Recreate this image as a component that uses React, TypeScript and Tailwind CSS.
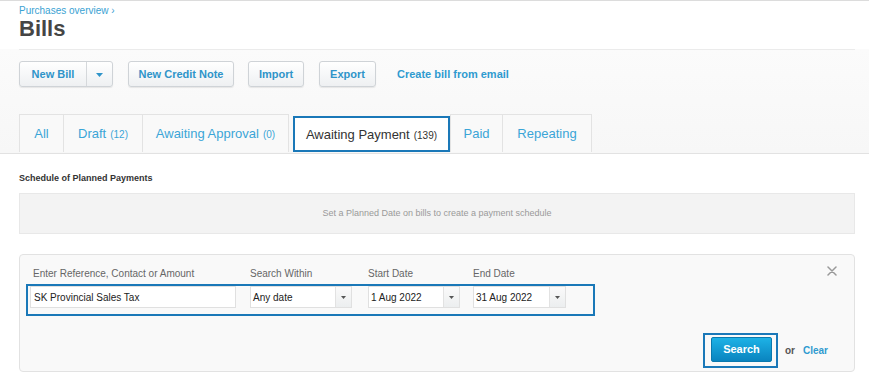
const font = { fontFamily: '"Liberation Sans", Arial, Helvetica, sans-serif' };

interface TabItem {
  label: string;
  count?: number;
  width: number;
  active?: boolean;
}

const tabs: TabItem[] = [
  { label: 'All', width: 45 },
  { label: 'Draft', count: 12, width: 79 },
  { label: 'Awaiting Approval', count: 0, width: 146 },
  { label: 'Awaiting Payment', count: 139, width: 157, active: true },
  { label: 'Paid', width: 53 },
  { label: 'Repeating', width: 89 },
];

function Caret() {
  return (
    <svg width="7" height="4" viewBox="0 0 7 4">
      <path d="M0 0 L7 0 L3.5 4 Z" fill="currentColor" />
    </svg>
  );
}

function ToolButton({ label, width }: { label: string; width: number }) {
  return (
    <button
      className="h-[26px] rounded-[3px] border border-[#cfd3d7] bg-gradient-to-b from-white to-[#eef0f2] text-[11px] font-bold text-[#2f94c9] shadow-[0_1px_1px_rgba(0,0,0,0.08)]"
      style={{ width }}
    >
      {label}
    </button>
  );
}

function SelectBox({ value, width }: { value: string; width: number }) {
  return (
    <div
      className="flex h-[22px] border border-[#e0e0e0] bg-white"
      style={{ width }}
    >
      <div className="flex flex-1 items-center pl-[2px] text-[10px] text-[#222]">{value}</div>
      <div className="flex w-[16px] items-center justify-center border-l border-[#e2e2e2] bg-gradient-to-b from-[#fafafa] to-[#eceeef] text-[#555]">
        <svg width="5" height="3" viewBox="0 0 5 3">
          <path d="M0 0 L5 0 L2.5 3 Z" fill="currentColor" />
        </svg>
      </div>
    </div>
  );
}

export default function App() {
  return (
    <div className="h-[382px] w-[869px] overflow-hidden border-t border-[#dcdcdc] bg-white" style={font}>
      {/* header */}
      <div className="h-[48px] pl-[19px] pr-[14px] pt-[5px]">
        <div className="text-[10px] leading-[10px] text-[#3aa2d3]">Purchases overview ›</div>
        <h1 className="text-[22px] font-bold leading-[26px] text-[#454545]">Bills</h1>
      </div>

      {/* action band */}
      <div className="h-[105px] border-b border-[#e2e2e2] bg-gradient-to-b from-[#fbfbfb] to-[#f7f7f7]">
        <div className="ml-[19px] mr-[14px] h-[1px] bg-[#ebebeb]" />
        <div className="mt-[11px] flex items-center px-[19px]">
          <div className="flex h-[26px] w-[94px] rounded-[3px] border border-[#cfd3d7] bg-gradient-to-b from-white to-[#eef0f2] text-[#2f94c9] shadow-[0_1px_1px_rgba(0,0,0,0.08)]">
            <span className="flex w-[66px] items-center justify-center text-[11px] font-bold">New Bill</span>
            <span className="flex flex-1 items-center justify-center border-l border-[#d5d8db] pt-[2px]">
              <Caret />
            </span>
          </div>
          <div className="ml-[15px]">
            <ToolButton label="New Credit Note" width={106} />
          </div>
          <div className="ml-[14px]">
            <ToolButton label="Import" width={56} />
          </div>
          <div className="ml-[15px]">
            <ToolButton label="Export" width={57} />
          </div>
          <a className="ml-[21px] text-[11px] font-bold text-[#2f9bd0]">Create bill from email</a>
        </div>

        <div className="mt-[27px] flex items-end px-[19px]">
          {tabs.map((t) =>
            t.active ? (
              <div
                key={t.label}
                className="ml-[4px] flex h-[36px] items-center justify-center border-2 border-[#1a78b8] bg-white text-[#333]"
                style={{ width: t.width }}
              >
                <span className="text-[13px]">
                  {t.label}
                  <span className="ml-[4px] text-[10px]">({t.count})</span>
                </span>
              </div>
            ) : (
              <div
                key={t.label}
                className="flex h-[38px] items-center justify-center border border-b-0 border-[#e3e3e3] bg-[#f9f9f9] text-[#3ba5d7] [&+&]:border-l-0"
                style={{ width: t.width }}
              >
                <span className="text-[13px]">
                  {t.label}
                  {t.count !== undefined && <span className="ml-[4px] text-[10px]">({t.count})</span>}
                </span>
              </div>
            )
          )}
        </div>
      </div>

      {/* schedule */}
      <div className="pl-[19px] pr-[14px] pt-[19px]">
        <div className="text-[9px] font-bold leading-[11px] text-[#333]">Schedule of Planned Payments</div>
        <div className="mt-[9px] flex h-[41px] items-center justify-center border border-[#e8e8e8] bg-[#f3f3f3] text-[9px] text-[#9a9a9a]">
          Set a Planned Date on bills to create a payment schedule
        </div>

        {/* search panel */}
        <div className="relative mt-[20px] h-[118px] rounded-[4px] border border-[#e2e2e2] bg-[#f9f9f9]">
          <button className="absolute right-[17px] top-[11px] text-[#999]">
            <svg width="10" height="10" viewBox="0 0 10 10">
              <path d="M1 1 L9 9 M9 1 L1 9" stroke="currentColor" strokeWidth="1.5" strokeLinecap="round" />
            </svg>
          </button>

          <div className="flex pt-[13px] text-[10px] leading-[12px] text-[#666]">
            <span className="w-[230px] pl-[13px]">Enter Reference, Contact or Amount</span>
            <span className="w-[118px]">Search Within</span>
            <span className="w-[105px]">Start Date</span>
            <span>End Date</span>
          </div>

          <div className="ml-[6px] mt-[4px] flex h-[32px] w-[569px] items-start border-2 border-[#1a78b8] pl-[2px]">
            <div className="flex h-[22px] w-[206px] items-center border border-[#e0e0e0] bg-white pl-[3px] text-[10px] text-[#222]">
              SK Provincial Sales Tax
            </div>
            <div className="ml-[14px]">
              <SelectBox value="Any date" width={102} />
            </div>
            <div className="ml-[16px]">
              <SelectBox value="1 Aug 2022" width={92} />
            </div>
            <div className="ml-[13px]">
              <SelectBox value="31 Aug 2022" width={93} />
            </div>
          </div>

          <div className="mt-[17px] flex items-center justify-end pr-[26px]">
            <div className="h-[35px] w-[75px] border-2 border-[#1a78b8] pl-[6px] pt-[1px]">
              <button className="h-[25px] w-[61px] rounded-[2px] border border-[#0b79ae] bg-gradient-to-b from-[#1db2e6] to-[#0a84bf] text-[11px] font-bold text-white">
                Search
              </button>
            </div>
            <span className="ml-[7px] text-[10px] font-bold text-[#555]">or</span>
            <a className="ml-[8px] text-[10px] font-bold text-[#2f9bd0]">Clear</a>
          </div>
        </div>
      </div>
    </div>
  );
}
